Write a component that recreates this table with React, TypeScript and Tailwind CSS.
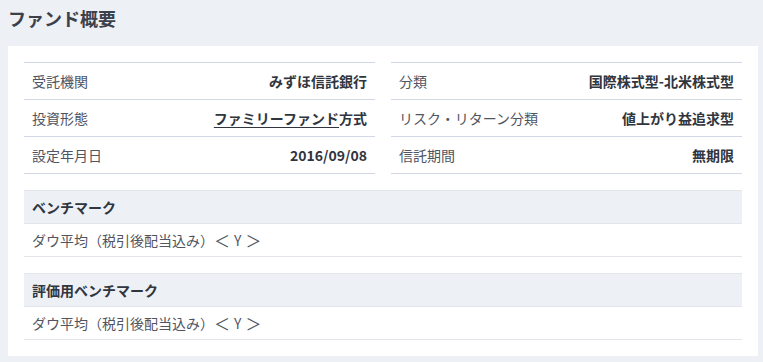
import React from "react";

type Row = { label: string; value: React.ReactNode };

const leftRows: Row[] = [
  { label: "受託機関", value: "みずほ信託銀行" },
  {
    label: "投資形態",
    value: (
      <>
        <a href="#" className="underline underline-offset-[3px] decoration-1">
          ファミリーファンド
        </a>
        方式
      </>
    ),
  },
  { label: "設定年月日", value: "2016/09/08" },
];

const rightRows: Row[] = [
  { label: "分類", value: "国際株式型-北米株式型" },
  { label: "リスク・リターン分類", value: "値上がり益追求型" },
  { label: "信託期間", value: "無期限" },
];

const benchmarks = [
  { title: "ベンチマーク", body: "ダウ平均（税引後配当込み）" },
  { title: "評価用ベンチマーク", body: "ダウ平均（税引後配当込み）" },
];

const InfoTable: React.FC<{ rows: Row[] }> = ({ rows }) => (
  <div className="border-t border-[#cfd8e3]">
    {rows.map((row) => (
      <div
        key={row.label}
        className="flex h-[37px] items-center justify-between border-b border-[#cfd8e3] px-2"
      >
        <span className="text-[#50555f]">{row.label}</span>
        <span className="font-bold text-[#30353e]">{row.value}</span>
      </div>
    ))}
  </div>
);

export default function App() {
  return (
    <div
      className="min-h-[362px] bg-[#edf0f4] pl-2 pr-[5px] text-[14px]"
      style={{ fontFamily: '"Noto Sans CJK JP", "Noto Sans", sans-serif' }}
    >
      <h2 className="h-[46px] text-[18px] font-bold leading-[36px] text-[#3b404b]">
        ファンド概要
      </h2>

      <div className="bg-white p-4">
        <div className="grid grid-cols-2 gap-4">
          <InfoTable rows={leftRows} />
          <InfoTable rows={rightRows} />
        </div>

        {benchmarks.map((b) => (
          <div key={b.title} className="mt-4">
            <div className="flex h-[34px] items-center border-y border-[#e2e6eb] bg-[#edf0f4] px-2 font-bold text-[#30353e]">
              {b.title}
            </div>
            <div className="flex h-[33px] items-center border-b border-[#e2e6eb] px-2 text-[#50555f]">
              {b.body}
              <span className="text-[16px]">＜</span>
              <span className="mx-[4px]">Y</span>
              <span className="text-[16px]">＞</span>
            </div>
          </div>
        ))}
      </div>
    </div>
  );
}
